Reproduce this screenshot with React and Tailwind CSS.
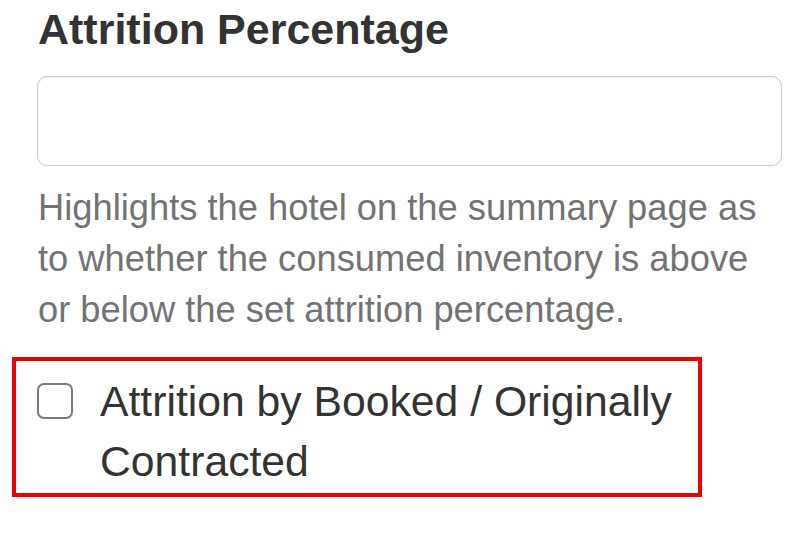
import React from 'react';

const App = () => {
  return (
    <div className="min-h-screen w-[811px] bg-white font-['Liberation_Sans',Arial,sans-serif]">
      <div className="pl-[38px] pt-[6px]">
        <h2 className="text-[43px] font-bold leading-[47px] text-[#333333]">Attrition Percentage</h2>
        <input
          type="text"
          className="mt-[23px] ml-[-1px] block h-[90px] w-[745px] rounded-[10px] border border-[#cccccc] bg-white shadow-[inset_0_1px_2px_rgba(0,0,0,0.08)] outline-none"
        />
        <p className="mt-[16px] w-[744px] text-[36.3px] leading-[51px] text-[#737373]">
          Highlights the hotel on the summary page as to whether the consumed inventory is above or below the set attrition percentage.
        </p>
      </div>

      {/* highlighted option */}
      <div className="ml-[12px] mt-[22px] flex h-[140px] w-[690px] items-start border-[4px] border-[#ee0000] pt-[10px] pl-[21px]">
        <span className="mt-[12px] block h-[36px] w-[36px] shrink-0 rounded-[7px] border-2 border-[#7a7a7a] bg-white" />
        <label className="ml-[27px] text-[42.7px] leading-[60px] text-[#333333]">
          Attrition by Booked / Originally Contracted
        </label>
      </div>
    </div>
  );
};

export default App;
